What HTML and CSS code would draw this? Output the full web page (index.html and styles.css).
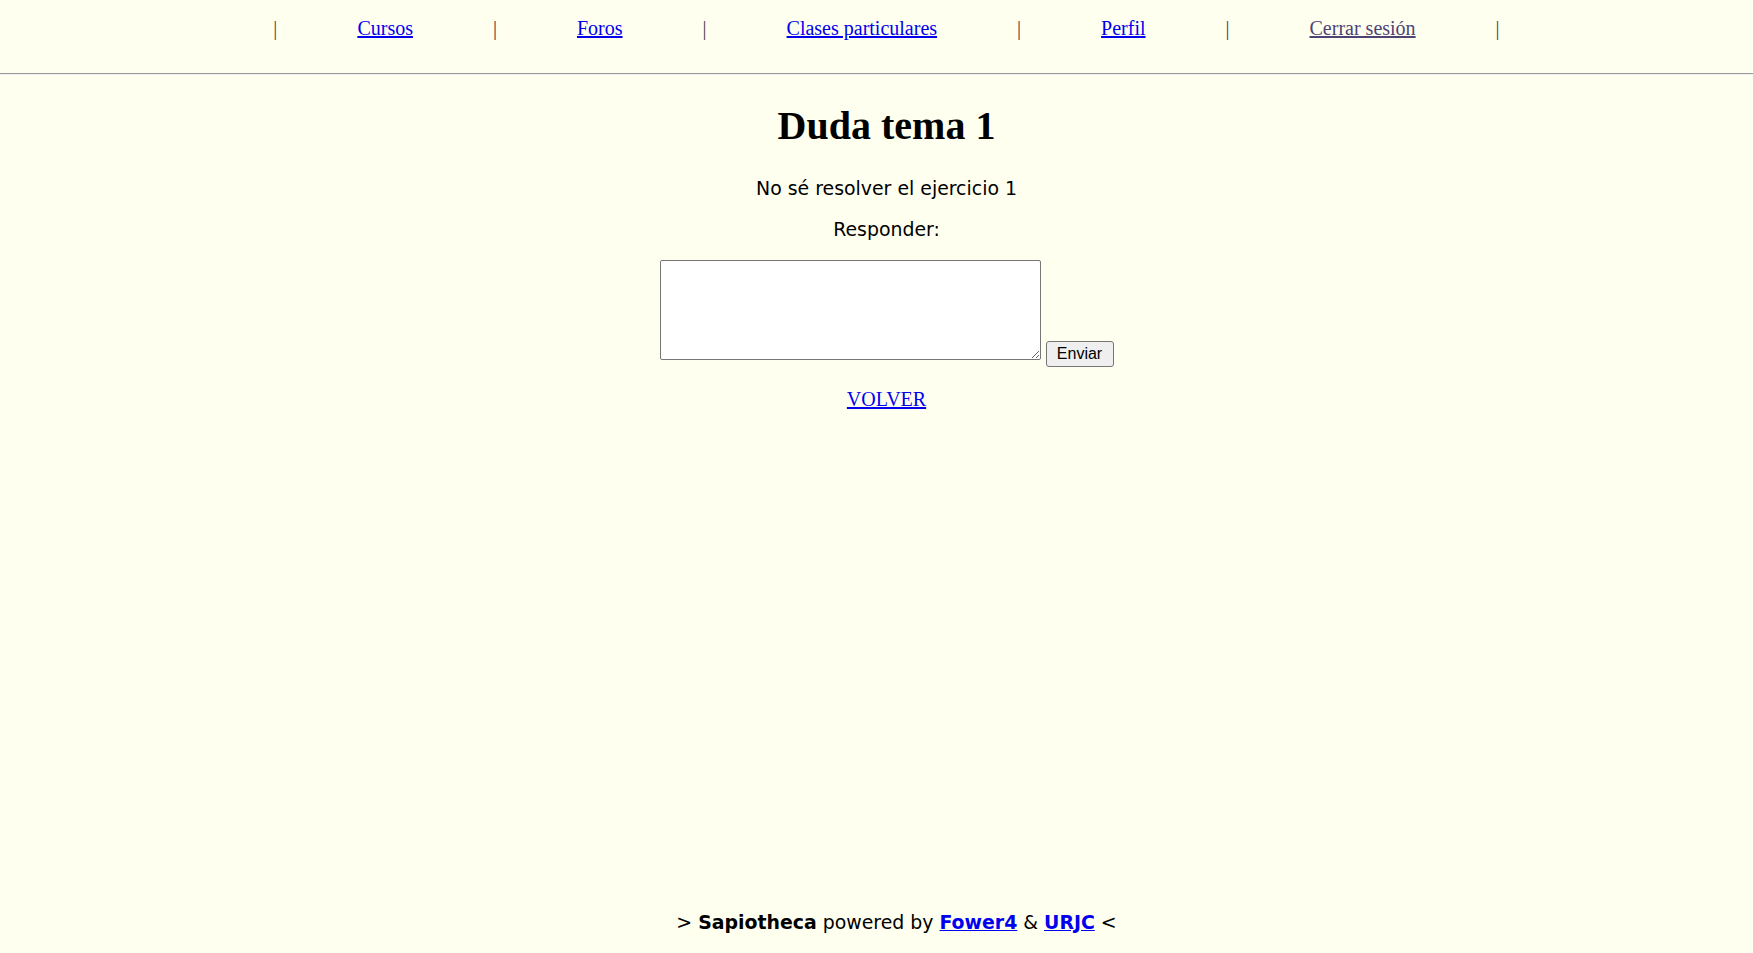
FILE: index.html
```html
<!DOCTYPE html>
<html lang="es">
<head>
<meta charset="utf-8">
<title>Duda tema 1</title>
<link rel="stylesheet" href="styles.css">
</head>
<body>
<header class="header">
  <nav class="nav">
    <span class="sep">|</span>
    <a class="nav-link" href="#">Cursos</a>
    <span class="sep">|</span>
    <a class="nav-link" href="#">Foros</a>
    <span class="sep">|</span>
    <a class="nav-link" href="#">Clases particulares</a>
    <span class="sep">|</span>
    <a class="nav-link" href="#">Perfil</a>
    <span class="sep">|</span>
    <a class="nav-link visited" href="#">Cerrar sesión</a>
    <span class="sep">|</span>
  </nav>
</header>
<hr class="rule">
<main class="main">
  <h1 class="title">Duda tema 1</h1>
  <p class="question">No sé resolver el ejercicio 1</p>
  <p class="label">Responder:</p>
  <form class="reply">
    <textarea class="reply-text"></textarea>
    <button class="send" type="button">Enviar</button>
  </form>
  <a class="back" href="#">VOLVER</a>
</main>
<footer class="footer">
  &gt; <b>Sapiotheca</b> powered by <a class="foot-link" href="#">Fower4</a> &amp; <a class="foot-link" href="#">URJC</a> &lt;
</footer>
</body>
</html>
```
FILE: styles.css
```css
html, body {
  margin: 0;
  padding: 0;
}
body {
  background: #fffff0;
  min-height: 100vh;
  display: flex;
  flex-direction: column;
  font-family: "DejaVu Sans", Verdana, sans-serif;
  color: #000;
}
.header {
  padding-top: 17px;
}
.nav {
  display: flex;
  justify-content: center;
  gap: 80px;
  padding-left: 20px;
  font-family: "Liberation Serif", "Times New Roman", serif;
  font-size: 20px;
  line-height: 23px;
}
.sep {
  color: #444;
}
.nav-link {
  color: #0000ee;
}
.nav-link.visited {
  color: #4d4375;
}
.rule {
  margin: 33px 0 0 0;
  height: 0;
  border: 0;
  border-top: 1px solid #9a9a9a;
  border-bottom: 1px solid #eeeeee;
}
.main {
  display: flex;
  flex-direction: column;
  align-items: center;
  padding-left: 20px;
}
.title {
  margin: 28px 0 0 0;
  font-family: "Liberation Serif", "Times New Roman", serif;
  font-size: 40px;
  line-height: 46px;
  font-weight: bold;
}
.question {
  margin: 28px 0 0 0;
  font-size: 18.9px;
  line-height: 22px;
}
.label {
  margin: 18.5px 0 0 0;
  font-size: 18.9px;
  line-height: 22px;
}
.reply {
  margin: 20px 0 0 0;
  display: flex;
  align-items: flex-start;
  gap: 5px;
}
.reply-text {
  box-sizing: border-box;
  width: 381px;
  height: 100px;
  margin: 0;
  border: 1px solid #767676;
  border-radius: 2px;
  background: #fff;
}
.send {
  box-sizing: border-box;
  margin: 81px 0 0 0;
  width: 68px;
  height: 26px;
  padding: 0;
  border: 1px solid #767676;
  border-radius: 3px;
  background: #efefef;
  color: #000;
  font-family: "Liberation Sans", Arial, sans-serif;
  font-size: 16px;
}
.back {
  margin-top: 21.5px;
  color: #0000ee;
  font-family: "Liberation Serif", "Times New Roman", serif;
  font-size: 20px;
  line-height: 23px;
}
.footer {
  margin-top: auto;
  padding: 0 0 20.5px 40px;
  text-align: center;
  font-size: 18.9px;
  line-height: 22px;
}
.foot-link {
  color: #0000ee;
  font-weight: bold;
}
```
